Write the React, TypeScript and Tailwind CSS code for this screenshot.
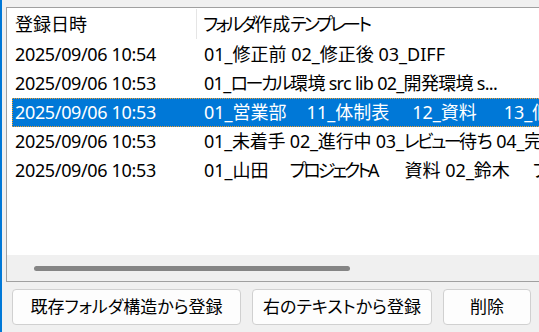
import React from "react";

const font = {
  fontFamily: '"Noto Sans", "Noto Sans CJK JP", sans-serif',
};

function J({ t, k = 2.3 }: { t: string; k?: number }) {
  const parts = t.split(/([\u3040-\u30FF]+)/);
  return (
    <>
      {parts.map((p, i) =>
        /^[\u3040-\u30FF]+$/.test(p) ? (
          <span key={i} style={{ letterSpacing: -k }}>
            {p}
          </span>
        ) : (
          <span key={i}>{p}</span>
        )
      )}
    </>
  );
}

type Seg = { t: string; ml?: number };

const rows: { date: string; segs: Seg[]; selected?: boolean; tr?: number; k?: number }[] = [
  { date: "2025/09/06 10:54", segs: [{ t: "01_修正前 02_修正後 03_DIFF" }] },
  {
    date: "2025/09/06 10:53",
    tr: 0.7,
    segs: [{ t: "01_ローカル環境 src lib 02_開発環境 s..." }],
  },
  {
    date: "2025/09/06 10:53",
    selected: true,
    segs: [
      { t: "01_営業部" },
      { t: "11_体制表", ml: 20 },
      { t: "12_資料", ml: 23 },
      { t: "13_個人", ml: 27 },
    ],
  },
  {
    date: "2025/09/06 10:53",
    tr: 0.2,
    k: 2.5,
    segs: [{ t: "01_未着手 02_進行中 03_レビュー待ち" }, { t: "04_完了", ml: 6 }],
  },
  {
    date: "2025/09/06 10:53",
    k: 3,
    segs: [
      { t: "01_山田" },
      { t: "プロジェクトA", ml: 21 },
      { t: "資料 02_鈴木", ml: 25 },
      { t: "プロジェクト", ml: 23 },
    ],
  },
];

function Cell({ segs, tr, k }: { segs: Seg[]; tr?: number; k?: number }) {
  return (
    <div className="flex whitespace-pre" style={tr ? { letterSpacing: -tr } : undefined}>
      {segs.map((s, i) => (
        <span key={i} className="shrink-0" style={s.ml ? { marginLeft: s.ml } : undefined}>
          <J t={s.t} k={k} />
        </span>
      ))}
    </div>
  );
}

function Btn({ w, children }: { w: string; children: React.ReactNode }) {
  return (
    <button
      className={
        w +
        " h-[36px] rounded-[4px] border border-[#d0d0d0] bg-[#fdfdfd] flex items-center justify-center text-black"
      }
    >
      {children}
    </button>
  );
}

export default function App() {
  return (
    <div
      className="w-[539px] h-[332px] bg-[#f0f0f0] flex overflow-hidden text-black [font-feature-settings:'palt']"
      style={font}
    >
      <div className="w-[2px] h-full bg-[#0078d7] shrink-0" />
      <div className="flex-1 flex flex-col pl-[4px] pr-[2px] pt-[7px]">
        {/* list box */}
        <div className="h-[275px] border border-[#a0a0a0] border-r-2 border-r-[#8c8c8c] bg-white flex flex-col overflow-hidden">
          <div className="flex-1 overflow-hidden pl-[5px] text-[18px]">
            {/* header */}
            <div className="h-[32px] flex items-center">
              <div className="w-[185px] pl-[3px] shrink-0 border-r border-[#e5e5e5] h-[30px] flex items-center">
                登録日時
              </div>
              <div className="pl-[6px] whitespace-nowrap">
                <J t="フォルダ作成テンプレート" k={2.8} />
              </div>
            </div>
            {rows.map((r, i) => (
              <div
                key={i}
                className={
                  "h-[29px] flex items-center whitespace-nowrap " +
                  (r.selected
                    ? "bg-[#0078d7] text-white outline outline-1 outline-dotted outline-[#f0a030] -outline-offset-1"
                    : "")
                }
              >
                <div className="w-[186px] pl-[3px] shrink-0 tracking-[-0.35px]">{r.date}</div>
                <div className="pl-[6px]">
                  <Cell segs={r.segs} tr={r.tr} k={r.k} />
                </div>
              </div>
            ))}
          </div>
          {/* horizontal scrollbar */}
          <div className="h-[26px] bg-[#f0f0f0] shrink-0 flex items-center pl-[27px]">
            <div className="w-[316px] h-[5px] rounded-full bg-[#858585]" />
          </div>
        </div>
        {/* buttons */}
        <div className="flex mt-[7px] pl-[6px] gap-[11px] text-[17px]">
          <Btn w="w-[229px]">既存フォルダ構造から登録</Btn>
          <Btn w="w-[180px]">右のテキストから登録</Btn>
          <Btn w="w-[88px]">削除</Btn>
        </div>
      </div>
    </div>
  );
}
